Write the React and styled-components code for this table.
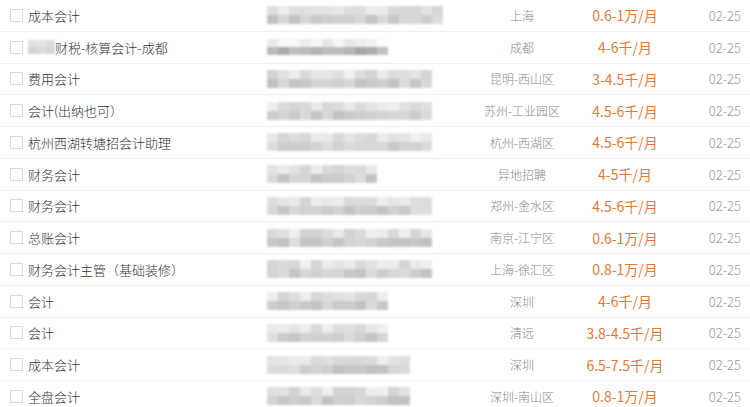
import React from 'react';
import styled, { createGlobalStyle } from 'styled-components';

const GlobalStyle = createGlobalStyle`
  html, body {
    margin: 0;
    padding: 0;
    background: #fff;
  }
  body {
    font-family: "Noto Sans CJK SC", "Noto Sans", sans-serif;
    font-weight: 300;
    overflow: hidden;
  }
`;

const List = styled.ul`
  list-style: none;
  margin: 0;
  padding: 0;
  width: 750px;
`;

const Row = styled.li`
  display: flex;
  align-items: center;
  height: 31.75px;
  box-sizing: border-box;
  border-bottom: 1px solid #efefef;
`;

const CheckCell = styled.div`
  width: 28px;
  padding-left: 10px;
  box-sizing: border-box;
  display: flex;
  align-items: center;
`;

const Box = styled.span`
  display: block;
  width: 11px;
  height: 11px;
  border: 1px solid #d9d9d9;
  background: #fff;
`;

const Title = styled.div`
  width: 239px;
  font-size: 13px;
  color: #333;
  white-space: nowrap;
  display: flex;
  align-items: center;
`;

const Company = styled.div`
  width: 210px;
  display: flex;
  align-items: center;
`;

const Mosaic = styled.div`
  display: grid;
  grid-template-columns: repeat(${({ cols }) => cols}, ${({ cellW }) => cellW}px);
  grid-auto-rows: ${({ cellH }) => cellH}px;
  filter: blur(1px);
`;

const Cell = styled.span`
  display: block;
`;

const Location = styled.div`
  width: 90px;
  text-align: center;
  font-size: 12px;
  color: #888;
  white-space: nowrap;
`;

const Salary = styled.div`
  width: 116px;
  text-align: center;
  font-size: 14px;
  font-weight: 400;
  color: #e27a37;
  white-space: nowrap;
`;

const DateCell = styled.div`
  flex: 1;
  text-align: right;
  padding-right: 9px;
  font-size: 13px;
  color: #999;
`;

const rows = [
  { title: '成本会计', w: 176, loc: '上海', pay: '0.6-1万/月' },
  { title: '财税-核算会计-成都', w: 121, loc: '成都', pay: '4-6千/月', prefix: true, dark: true },
  { title: '费用会计', w: 166, loc: '昆明-西山区', pay: '3-4.5千/月' },
  { title: '会计(出纳也可）', w: 165, loc: '苏州-工业园区', pay: '4.5-6千/月' },
  { title: '杭州西湖转塘招会计助理', w: 165, loc: '杭州-西湖区', pay: '4.5-6千/月' },
  { title: '财务会计', w: 111, loc: '异地招聘', pay: '4-5千/月' },
  { title: '财务会计', w: 167, loc: '郑州-金水区', pay: '4.5-6千/月' },
  { title: '总账会计', w: 166, loc: '南京-江宁区', pay: '0.6-1万/月' },
  { title: '财务会计主管（基础装修）', w: 165, loc: '上海-徐汇区', pay: '0.8-1万/月' },
  { title: '会计', w: 121, loc: '深圳', pay: '4-6千/月' },
  { title: '会计', w: 121, loc: '清远', pay: '3.8-4.5千/月' },
  { title: '成本会计', w: 148, loc: '深圳', pay: '6.5-7.5千/月' },
  { title: '全盘会计', w: 148, loc: '深圳-南山区', pay: '0.8-1万/月' },
];

function seeded(seed) {
  let s = seed * 9301 + 49297;
  return () => {
    s = (s * 9301 + 49297) % 233280;
    return s / 233280;
  };
}

function Blur({ width, seed, dark }) {
  const cols = Math.round(width / 11);
  const rand = seeded(seed + 7);
  const cells = [];
  for (let r = 0; r < 2; r += 1) {
    for (let c = 0; c < cols; c += 1) {
      const base = dark ? (r === 1 ? 178 : 242) : r === 0 ? 225 : 208;
      const g = Math.round(base + (rand() - 0.5) * 30);
      cells.push(<Cell key={`${r}-${c}`} style={{ background: `rgb(${g},${g},${g + 2})` }} />);
    }
  }
  return (
    <Mosaic cols={cols} cellW={11} cellH={dark ? 8 : 9}>
      {cells}
    </Mosaic>
  );
}

function PrefixBlur() {
  const rand = seeded(42);
  const cells = [];
  for (let i = 0; i < 6; i += 1) {
    const g = Math.round(210 + (rand() - 0.5) * 40);
    cells.push(<Cell key={i} style={{ background: `rgb(${g},${g},${g})` }} />);
  }
  return (
    <Mosaic cols={3} cellW={9} cellH={7}>
      {cells}
    </Mosaic>
  );
}

export default function App() {
  return (
    <>
      <GlobalStyle />
      <List>
        {rows.map((row, i) => (
          <Row key={i}>
            <CheckCell>
              <Box />
            </CheckCell>
            <Title>
              {row.prefix && <PrefixBlur />}
              {row.title}
            </Title>
            <Company>
              <Blur width={row.w} seed={i + 1} dark={row.dark} />
            </Company>
            <Location>{row.loc}</Location>
            <Salary>{row.pay}</Salary>
            <DateCell>02-25</DateCell>
          </Row>
        ))}
      </List>
    </>
  );
}
